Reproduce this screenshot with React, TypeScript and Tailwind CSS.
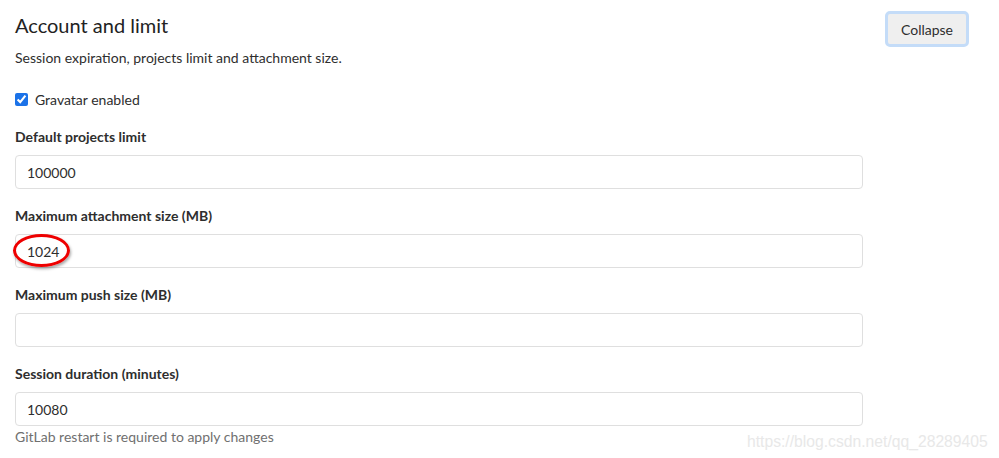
import React from 'react';

const font = { fontFamily: 'Lato, "Noto Sans", sans-serif' };

function Field({ label, value, circled }: { label: string; value: string; circled?: boolean }) {
  return (
    <div className="mb-[17px]">
      <label className="mb-[8px] block text-[14px] font-bold leading-[20px] text-[#2e2e2e]">{label}</label>
      <div className="relative">
        <div className="flex h-[34px] w-[848px] items-center rounded-[4px] border border-[#dfdfdf] bg-white px-[11px] text-[14px] text-[#2e2e2e]">
          {value}
        </div>
        {circled && (
          <div className="absolute left-[-2px] top-[0px] h-[33px] w-[57px] rounded-[50%] border-[3px] border-[#ee0000] shadow-[1px_2px_3px_rgba(0,0,0,0.35)]" />
        )}
      </div>
    </div>
  );
}

export default function App() {
  return (
    <div className="relative h-[458px] w-[999px] bg-white" style={font}>
      <div className="flex justify-between pl-[15px] pr-[30px] pt-[11px]">
        <div>
          <h4 className="text-[20px] leading-[28px] text-[#222]">Account and limit</h4>
          <p className="mt-[9px] text-[14px] leading-[20px] text-[#2e2e2e]">
            Session expiration, projects limit and attachment size.
          </p>
        </div>
        <button className="h-[36px] w-[84px] rounded-[5px] border-[3px] border-[#c4dcf8] bg-[#efefef] text-[14px] text-[#2e2e2e]">
          Collapse
        </button>
      </div>
      <div className="px-[15px] pt-[21px]">
        <div className="mb-[17px] flex items-center gap-[7px] text-[14px] text-[#2e2e2e]">
          <input type="checkbox" defaultChecked className="h-[13px] w-[13px] accent-[#1b72e8]" />
          <span>Gravatar enabled</span>
        </div>
        <Field label="Default projects limit" value="100000" />
        <Field label="Maximum attachment size (MB)" value="1024" circled />
        <Field label="Maximum push size (MB)" value="" />
        <div>
          <label className="mb-[8px] block text-[14px] font-bold leading-[20px] text-[#2e2e2e]">Session duration (minutes)</label>
          <div className="flex h-[34px] w-[848px] items-center rounded-[4px] border border-[#dfdfdf] bg-white px-[11px] text-[14px] text-[#2e2e2e]">
            10080
          </div>
          <p className="mt-[2px] text-[14px] leading-[18px] text-[#707070]">GitLab restart is required to apply changes</p>
        </div>
      </div>
      <div
        className="absolute left-[747px] top-[430px] text-[15.7px] text-[#e8e8e8]"
        style={{ fontFamily: '"Liberation Sans", Arial, sans-serif' }}
      >
        https://blog.csdn.net/qq_28289405
      </div>
    </div>
  );
}
